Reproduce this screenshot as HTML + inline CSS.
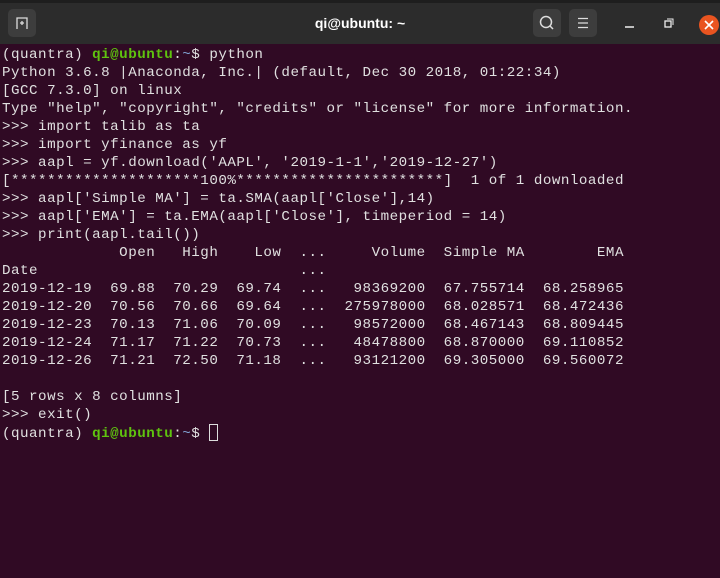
<!DOCTYPE html><html><head><style>
body{margin:0;width:720px;height:578px;background:#300a24;overflow:hidden;position:relative;font-family:"Liberation Sans",sans-serif}
#tb{position:absolute;left:0;top:0;width:720px;height:44px;background:#2c2c2c;border-top:3px solid #1e1e1e;box-sizing:border-box}
.b{position:absolute;top:6px;width:28px;height:28px;background:#3d3d3d;border-radius:5px}
#t{position:absolute;left:0;width:720px;top:12px;text-align:center;color:#fff;font-weight:bold;font-size:14px}
pre{position:absolute;left:2px;top:46px;margin:0;font-family:"Liberation Mono",monospace;font-size:14.2px;letter-spacing:0.5px;line-height:18px;color:#e0e0e0}
.g{color:#5fc30f;font-weight:bold}.bl{color:#7f9fcf}
.cur{display:inline-block;width:9px;height:17px;border:1px solid #ddd;vertical-align:-4px;box-sizing:border-box}
</style></head><body>
<div id="tb">
<div class="b" style="left:8px"><svg width="28" height="28"><path d="M9 20V9h10v11M12 14h4M14 12v4" stroke="#ddd" fill="none" stroke-width="1.3"/></svg></div>
<div id="t">qi@ubuntu: ~</div>
<div class="b" style="left:533px"><svg width="28" height="28"><circle cx="13" cy="13" r="5.5" stroke="#ddd" fill="none" stroke-width="1.5"/><path d="M17 17l3 3" stroke="#ddd" stroke-width="1.5"/></svg></div>
<div class="b" style="left:569px"><svg width="28" height="28"><path d="M9 9.5h10M9 14h10M9 18.5h10" stroke="#ddd" stroke-width="1.3"/></svg></div>
<svg style="position:absolute;left:620px;top:10px" width="60" height="20"><path d="M5 14h9" stroke="#eee" stroke-width="1.5"/><rect x="45" y="8" width="6" height="6" stroke="#eee" fill="none" stroke-width="1.3"/><path d="M47 6h6v6" stroke="#eee" fill="none"/></svg>
<svg style="position:absolute;left:697px;top:10px" width="23" height="24"><circle cx="12" cy="12" r="10" fill="#e95420"/><path d="M8 8l8 8M16 8l-8 8" stroke="#fff" stroke-width="1.6"/></svg>
</div>
<pre>(quantra) <span class="g">qi@ubuntu</span>:<span class="bl">~</span>$ python
Python 3.6.8 |Anaconda, Inc.| (default, Dec 30 2018, 01:22:34)
[GCC 7.3.0] on linux
Type "help", "copyright", "credits" or "license" for more information.
&gt;&gt;&gt; import talib as ta
&gt;&gt;&gt; import yfinance as yf
&gt;&gt;&gt; aapl = yf.download('AAPL', '2019-1-1','2019-12-27')
[*********************100%***********************]  1 of 1 downloaded
&gt;&gt;&gt; aapl['Simple MA'] = ta.SMA(aapl['Close'],14)
&gt;&gt;&gt; aapl['EMA'] = ta.EMA(aapl['Close'], timeperiod = 14)
&gt;&gt;&gt; print(aapl.tail())
             Open   High    Low  ...     Volume  Simple MA        EMA
Date                             ...
2019-12-19  69.88  70.29  69.74  ...   98369200  67.755714  68.258965
2019-12-20  70.56  70.66  69.64  ...  275978000  68.028571  68.472436
2019-12-23  70.13  71.06  70.09  ...   98572000  68.467143  68.809445
2019-12-24  71.17  71.22  70.73  ...   48478800  68.870000  69.110852
2019-12-26  71.21  72.50  71.18  ...   93121200  69.305000  69.560072

[5 rows x 8 columns]
&gt;&gt;&gt; exit()
(quantra) <span class="g">qi@ubuntu</span>:<span class="bl">~</span>$ <span class="cur"></span></pre>
</body></html>
